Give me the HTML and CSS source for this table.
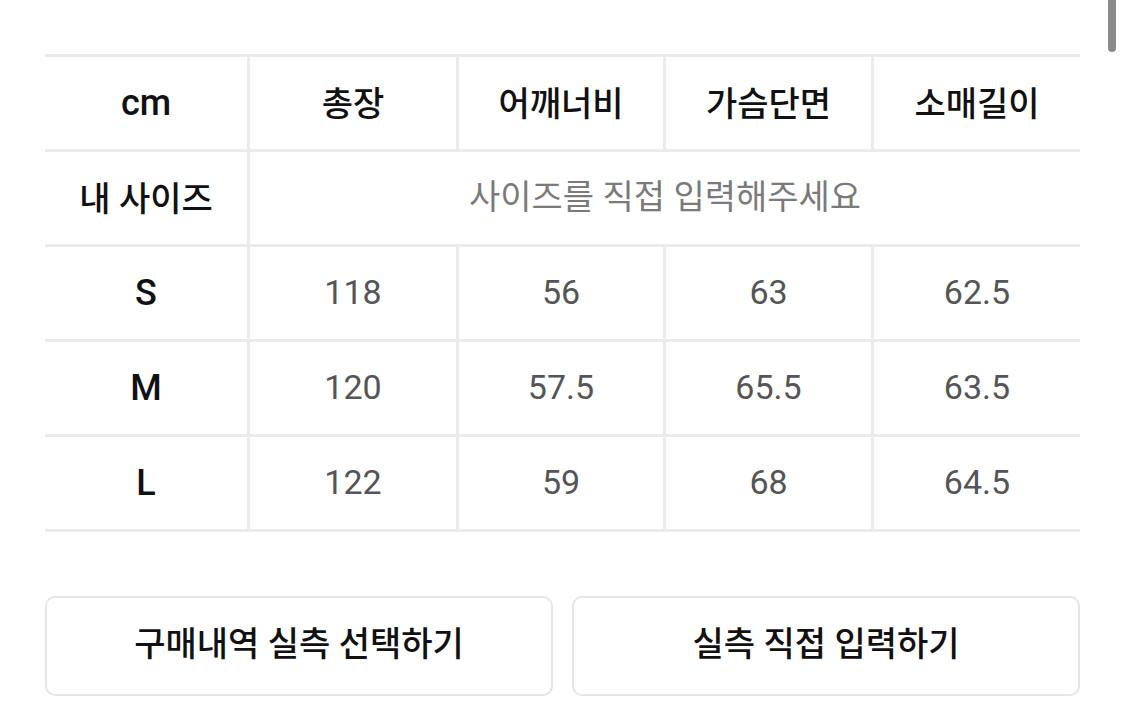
FILE: index.html
```html
<!DOCTYPE html>
<html lang="ko">
<head>
<meta charset="utf-8">
<link rel="stylesheet" href="styles.css">
</head>
<body>
<div class="page">
  <div class="size-table">
    <div class="cell head latin">cm</div>
    <div class="cell head">총장</div>
    <div class="cell head">어깨너비</div>
    <div class="cell head">가슴단면</div>
    <div class="cell head last">소매길이</div>

    <div class="cell head">내 사이즈</div>
    <div class="cell hint span4">사이즈를 직접 입력해주세요</div>

    <div class="cell head latin">S</div>
    <div class="cell val">118</div>
    <div class="cell val">56</div>
    <div class="cell val">63</div>
    <div class="cell val last">62.5</div>

    <div class="cell head latin">M</div>
    <div class="cell val">120</div>
    <div class="cell val">57.5</div>
    <div class="cell val">65.5</div>
    <div class="cell val last">63.5</div>

    <div class="cell head latin">L</div>
    <div class="cell val">122</div>
    <div class="cell val">59</div>
    <div class="cell val">68</div>
    <div class="cell val last">64.5</div>
  </div>

  <div class="actions">
    <button class="btn">구매내역 실측 선택하기</button>
    <button class="btn">실측 직접 입력하기</button>
  </div>
</div>
<div class="scrollbar"></div>
</body>
</html>
```
FILE: styles.css
```css
html, body {
  margin: 0;
  padding: 0;
  background: #ffffff;
}

body {
  width: 1125px;
  height: 728px;
  overflow: hidden;
  position: relative;
  font-family: "Roboto", "Noto Sans CJK KR", sans-serif;
  color: #111;
}

.page {
  padding: 54px 45px 0 45px;
}

.size-table {
  display: grid;
  grid-template-columns: 205px 209px 207px 208px 206px;
  grid-auto-rows: 95px;
  border-top: 3px solid #ebebeb;
}

.cell {
  display: flex;
  align-items: center;
  justify-content: center;
  padding-bottom: 4px;
  border-bottom: 3px solid #ebebeb;
  border-right: 3px solid #ebebeb;
  box-sizing: border-box;
  font-size: 34px;
  font-family: "Roboto", "Noto Sans CJK KR", sans-serif;
}

.cell.last {
  border-right: none;
}

.head {
  font-weight: 500;
  color: #111;
}

.head.latin {
  font-size: 36px;
  padding-bottom: 0;
}

.val {
  color: #555;
  font-weight: 400;
  font-size: 34px;
  padding-bottom: 2px;
}

.hint {
  grid-column: span 4;
  border-right: none;
  color: #7a7a7a;
  font-size: 34px;
  font-weight: 400;
  padding-bottom: 8px;
}

.actions {
  display: flex;
  gap: 19px;
  margin-top: 64px;
}

.btn {
  flex: 1;
  height: 100px;
  background: #fff;
  border: 2px solid #e6e6e6;
  border-radius: 10px;
  font-family: "Roboto", "Noto Sans CJK KR", sans-serif;
  font-size: 34px;
  font-weight: 500;
  color: #111;
  padding: 0 0 10px 0;
}

.scrollbar {
  position: absolute;
  top: -10px;
  right: 9px;
  width: 8px;
  height: 62px;
  border-radius: 4px;
  background: #8a8a8a;
}
```
